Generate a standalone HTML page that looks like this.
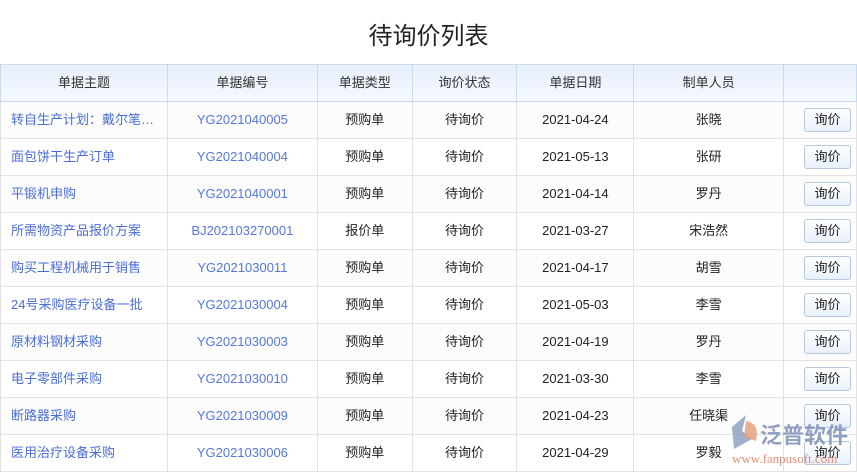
<!DOCTYPE html><html><head><meta charset="utf-8"><style>
body{margin:0;width:857px;height:476px;background:#fff;font-family:"Liberation Sans","Noto Sans CJK SC",sans-serif;overflow:hidden;position:relative}
h1{position:absolute;top:20px;left:0;width:857px;margin:0;text-align:center;font-size:24px;font-weight:normal;color:#222;line-height:34px}
table{position:absolute;top:64px;left:0;border-collapse:collapse;table-layout:fixed;font-size:13px}
th{height:36px;padding:0;background:linear-gradient(#e6effc,#f6f9ff);border:1px solid #c9d9ee;font-weight:normal;color:#333;line-height:16px}
td{height:36px;padding:0;border:1px solid #e2e2e2;text-align:center;color:#222;white-space:nowrap;overflow:hidden;text-overflow:ellipsis;line-height:16px;vertical-align:middle}
tr:nth-child(even) td{background:#fcfcfc}
td.a{text-align:left;padding-left:10px;color:#4a6ed8}
td.b{color:#5577dd}
.btn{display:inline-block;vertical-align:middle;box-sizing:border-box;width:47px;height:24px;line-height:22px;border:1px solid #b8c8dc;border-radius:3px;background:linear-gradient(#fff,#e8f1fb);color:#222;margin-left:15px}
.logo{position:absolute;left:722px;top:405px;width:135px;height:71px}
</style></head><body>
<h1>待询价列表</h1>
<table>
<colgroup><col style="width:167px"><col style="width:150px"><col style="width:95px"><col style="width:105px"><col style="width:117px"><col style="width:150px"><col style="width:73px"></colgroup>
<tr><th>单据主题</th><th>单据编号</th><th>单据类型</th><th>询价状态</th><th>单据日期</th><th>制单人员</th><th></th></tr>
<tr><td class="a">转自生产计划：戴尔笔…</td><td class="b">YG2021040005</td><td>预购单</td><td>待询价</td><td>2021-04-24</td><td>张晓</td><td><span class="btn">询价</span></td></tr>
<tr><td class="a">面包饼干生产订单</td><td class="b">YG2021040004</td><td>预购单</td><td>待询价</td><td>2021-05-13</td><td>张研</td><td><span class="btn">询价</span></td></tr>
<tr><td class="a">平锻机申购</td><td class="b">YG2021040001</td><td>预购单</td><td>待询价</td><td>2021-04-14</td><td>罗丹</td><td><span class="btn">询价</span></td></tr>
<tr><td class="a">所需物资产品报价方案</td><td class="b">BJ202103270001</td><td>报价单</td><td>待询价</td><td>2021-03-27</td><td>宋浩然</td><td><span class="btn">询价</span></td></tr>
<tr><td class="a">购买工程机械用于销售</td><td class="b">YG2021030011</td><td>预购单</td><td>待询价</td><td>2021-04-17</td><td>胡雪</td><td><span class="btn">询价</span></td></tr>
<tr><td class="a">24号采购医疗设备一批</td><td class="b">YG2021030004</td><td>预购单</td><td>待询价</td><td>2021-05-03</td><td>李雪</td><td><span class="btn">询价</span></td></tr>
<tr><td class="a">原材料钢材采购</td><td class="b">YG2021030003</td><td>预购单</td><td>待询价</td><td>2021-04-19</td><td>罗丹</td><td><span class="btn">询价</span></td></tr>
<tr><td class="a">电子零部件采购</td><td class="b">YG2021030010</td><td>预购单</td><td>待询价</td><td>2021-03-30</td><td>李雪</td><td><span class="btn">询价</span></td></tr>
<tr><td class="a">断路器采购</td><td class="b">YG2021030009</td><td>预购单</td><td>待询价</td><td>2021-04-23</td><td>任晓渠</td><td><span class="btn">询价</span></td></tr>
<tr><td class="a">医用治疗设备采购</td><td class="b">YG2021030006</td><td>预购单</td><td>待询价</td><td>2021-04-29</td><td>罗毅</td><td><span class="btn">询价</span></td></tr>
</table>
<svg class="logo" viewBox="0 0 135 71">
<path d="M10 22 L24 10 L20 26 L30 34 L12 44 Z" fill="#8a9bbd" opacity=".8"/>
<path d="M24 16 Q38 18 34 36 L22 32 Z" fill="#e59a7a" opacity=".8"/>
<text x="38" y="38" font-family="Noto Sans CJK SC,sans-serif" font-size="22" font-weight="bold" fill="#7d90b8" opacity=".85">泛普软件</text>
<text x="10" y="58" font-family="Liberation Serif,serif" font-size="13" fill="#e07a5a" opacity=".85">www.fanpusoft.com</text>
</svg>
</body></html>
